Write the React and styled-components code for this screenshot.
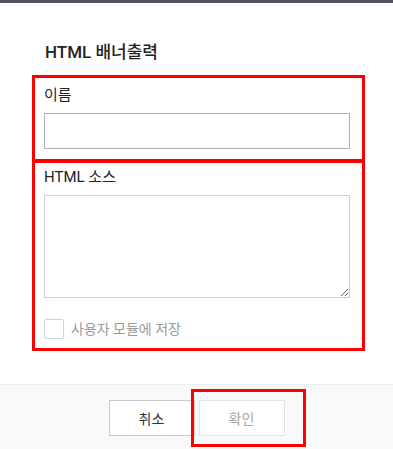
import React from "react";
import styled, { createGlobalStyle } from "styled-components";

const FONT = `Roboto, "Noto Sans CJK KR", "Noto Sans", sans-serif`;

const GlobalStyle = createGlobalStyle`
  html, body {
    margin: 0;
    padding: 0;
    background: #ffffff;
  }
  body {
    font-family: ${FONT};
    color: #222;
  }
`;

const Modal = styled.div`
  width: 393px;
  height: 449px;
  display: flex;
  flex-direction: column;
  border-top: 3px solid #4e535c;
  box-sizing: border-box;
  background: #fff;
  overflow: hidden;
`;

const Body = styled.div`
  flex: 1;
  display: flex;
  flex-direction: column;
  padding-top: 37px;
`;

const Title = styled.h2`
  margin: 0 0 11px 45px;
  font-size: 17px;
  line-height: 24px;
  font-weight: 500;
  color: #222;
`;

const Field = styled.div`
  display: flex;
  flex-direction: column;
  gap: 8px;
  margin: ${(p) => (p.$overlap ? "-2px" : "0")} 28px 0 32px;
  padding: ${(p) => p.$pad};
  border: 3px solid #ff0000;
`;

const Label = styled.label`
  font-size: 15px;
  line-height: 20px;
  color: #222;
`;

const Input = styled.input`
  box-sizing: border-box;
  width: 306px;
  height: 36px;
  margin: 0;
  border: 1px solid #a9afbb;
  border-radius: 0;
  outline: none;
`;

const TextArea = styled.textarea`
  box-sizing: border-box;
  width: 306px;
  height: 103px;
  margin: 0;
  border: 1px solid #c9ced7;
  border-radius: 0;
  outline: none;
  resize: both;
`;

const CheckRow = styled.label`
  display: flex;
  align-items: center;
  gap: 7px;
  margin-top: 13px;
  font-size: 14px;
  line-height: 20px;
  color: #9a9a9a;
`;

const Box = styled.span`
  box-sizing: border-box;
  width: 20px;
  height: 20px;
  border: 1px solid #cdd3dc;
  border-radius: 2px;
  background: #fff;
`;

const Footer = styled.div`
  height: 65px;
  display: flex;
  justify-content: center;
  align-items: flex-start;
  gap: 4px;
  padding-top: 15px;
  box-sizing: border-box;
  background: #f8f9fb;
  border-top: 1px solid #eceef2;
`;

const Button = styled.button`
  position: relative;
  box-sizing: border-box;
  width: 86px;
  height: 36px;
  margin: 0;
  padding: 0;
  background: #fff;
  border: 1px solid ${(p) => (p.$disabled ? "#dfe3ea" : "#c6cbd4")};
  color: ${(p) => (p.$disabled ? "#a6a6a6" : "#333")};
  font-family: ${FONT};
  font-size: 14px;
  cursor: pointer;
`;

const Highlight = styled.span`
  position: absolute;
  left: -9px;
  top: -12px;
  width: 115px;
  height: 58px;
  box-sizing: border-box;
  border: 3px solid #ff0000;
  pointer-events: none;
`;

export default function App() {
  return (
    <>
      <GlobalStyle />
      <Modal>
        <Body>
          <Title>HTML 배너출력</Title>
          <Field $pad="7px 12px 10px 9px">
            <Label>이름</Label>
            <Input type="text" />
          </Field>
          <Field $overlap $pad="4px 12px 9px 9px">
            <Label>HTML 소스</Label>
            <TextArea />
            <CheckRow>
              <Box />
              사용자 모듈에 저장
            </CheckRow>
          </Field>
        </Body>
        <Footer>
          <Button>취소</Button>
          <Button $disabled>
            확인
            <Highlight />
          </Button>
        </Footer>
      </Modal>
    </>
  );
}
